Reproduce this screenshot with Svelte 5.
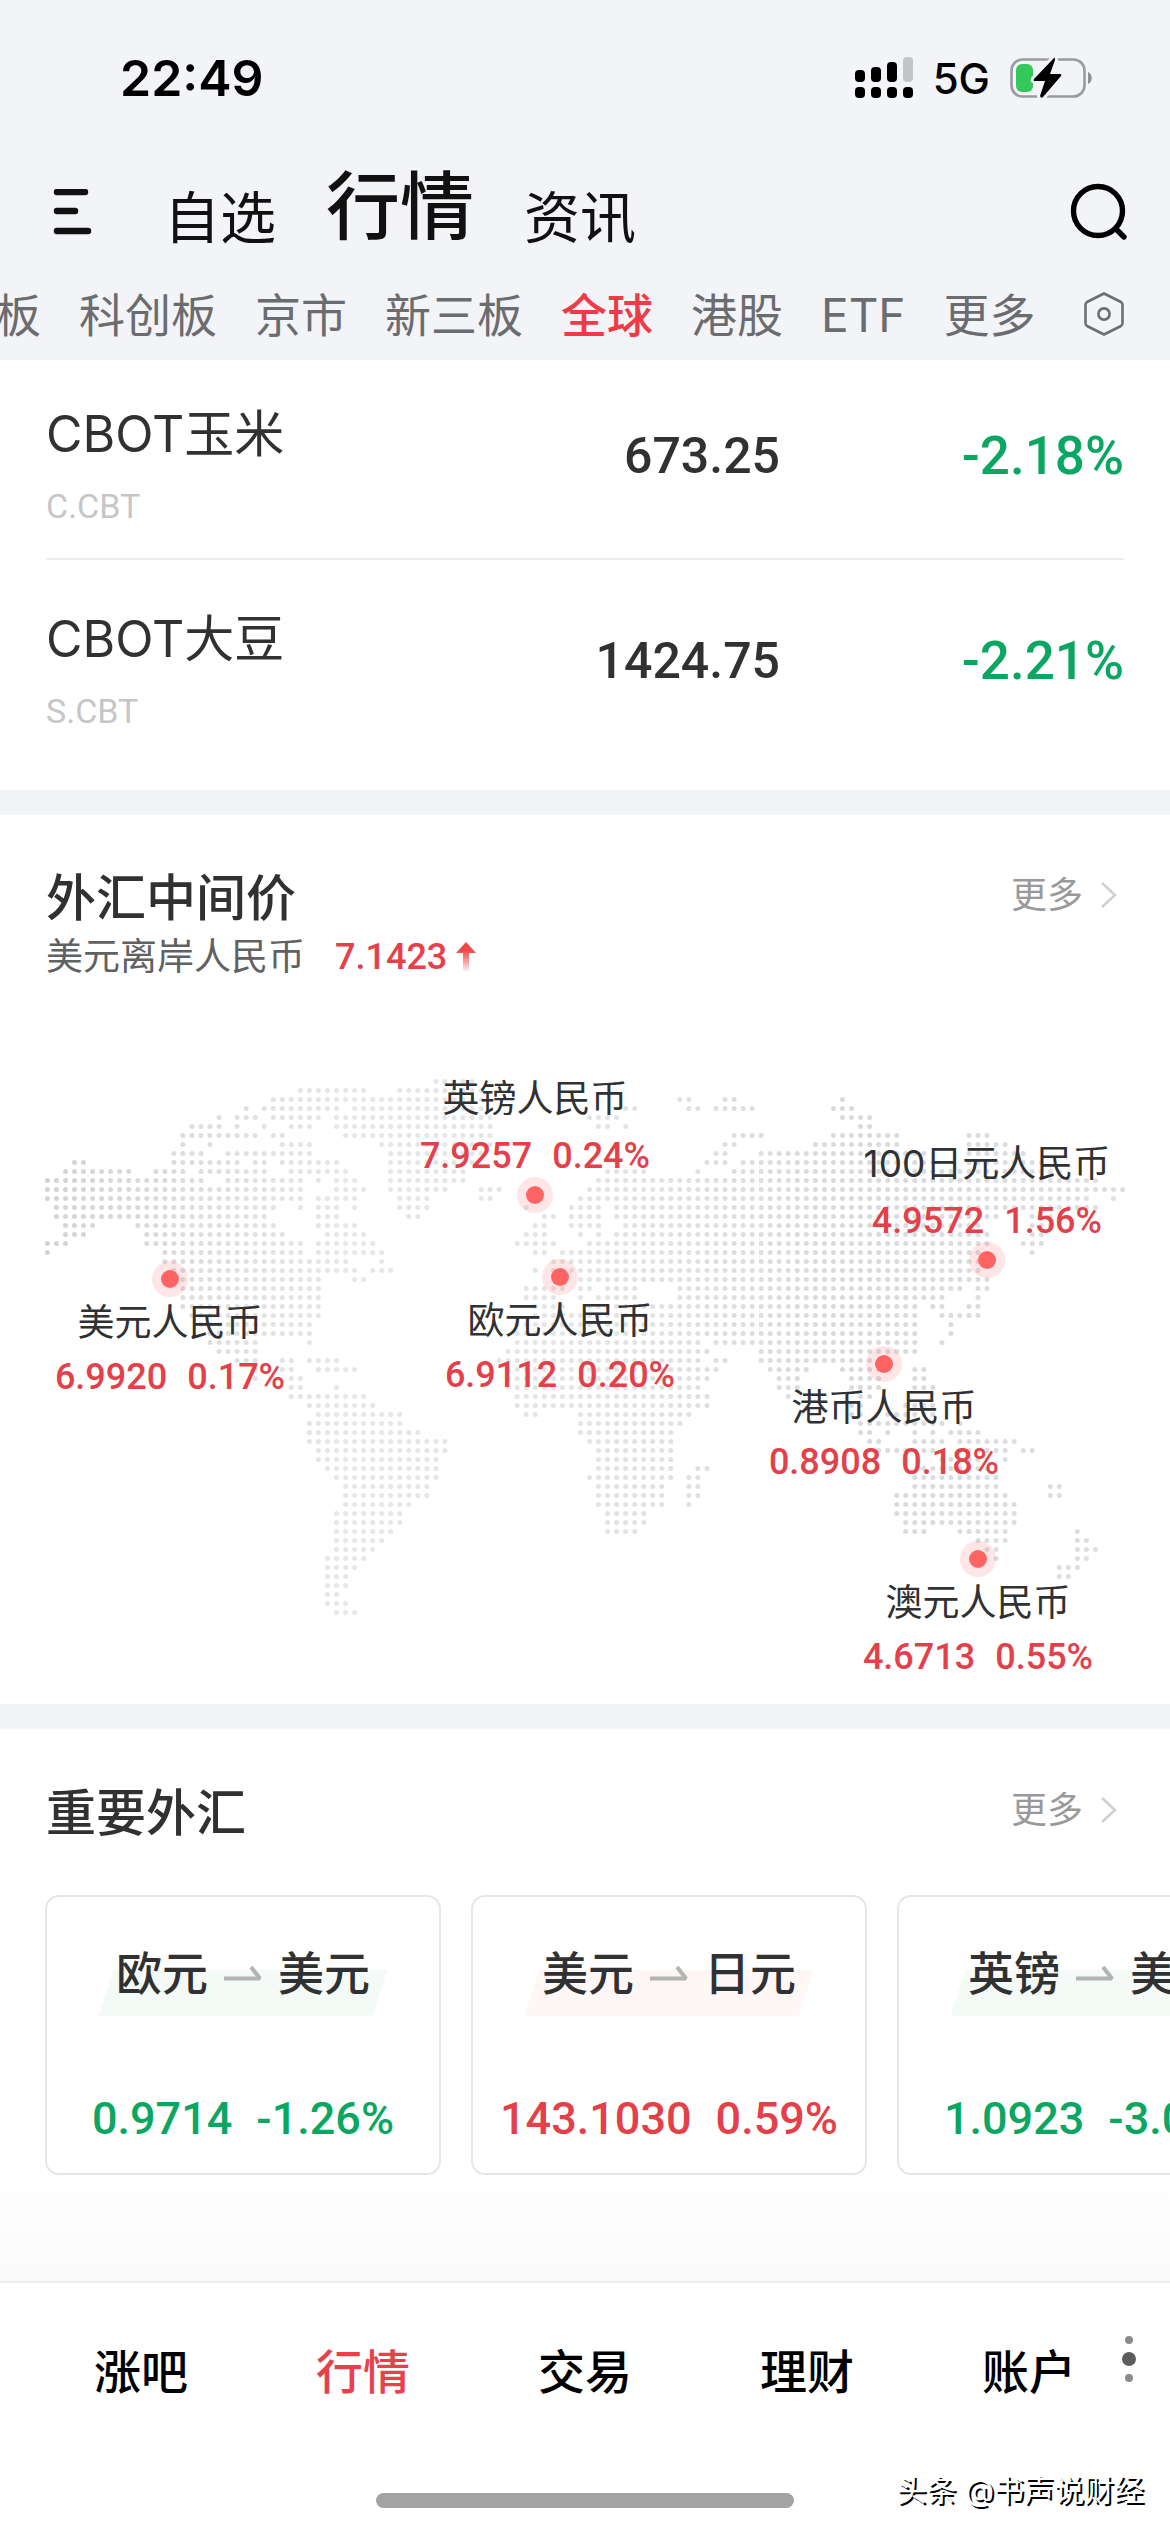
<script>
  const sections = ['自选', '行情', '资讯'];
  const markets = ['板', '科创板', '京市', '新三板', '全球', '港股', 'ETF', '更多'];
  const futures = [
    { name: 'CBOT玉米', code: 'C.CBT', price: '673.25', change: '-2.18%' },
    { name: 'CBOT大豆', code: 'S.CBT', price: '1424.75', change: '-2.21%' }
  ];
  const pairs = [
    { from: '欧元', to: '美元', rate: '0.9714', change: '-1.26%', dir: 'down' },
    { from: '美元', to: '日元', rate: '143.1030', change: '0.59%', dir: 'up' },
    { from: '英镑', to: '美元', rate: '1.0923', change: '-3.02%', dir: 'down' }
  ];
  const tabs = ['涨吧', '行情', '交易', '理财', '账户'];

  const mapWidth = 1170;
  const mapHeight = 640;
  const pins = [
    { name: '美元人民币', rate: '6.9920', change: '0.17%', x: 170, y: 221 },
    { name: '英镑人民币', rate: '7.9257', change: '0.24%', x: 535, y: 137, above: true },
    { name: '欧元人民币', rate: '6.9112', change: '0.20%', x: 560, y: 219 },
    { name: '100日元人民币', rate: '4.9572', change: '1.56%', x: 987, y: 202, above: true },
    { name: '港币人民币', rate: '0.8908', change: '0.18%', x: 884, y: 306 },
    { name: '澳元人民币', rate: '4.6713', change: '0.55%', x: 978, y: 501 }
  ];

  // Land columns of the dotted world map, one line per row of dots.
  const land = `43-47
28-35 39-48
25-48 70-71 75-76 88
22 24-32 34-48 64-65 71-72 74-78 87-89
19 21-23 25-30 32-49 60-63 88-91
16-19 21 24 27-29 32-49 61-62 64 90-91
15-23 25-26 33-49 76-79 87-94 102-104
15 18 26-29 37-49 75-76 85-94 102-106
14-17 20-29 38-48 74-75 79-97 102-108
3-4 14-21 23-24 26-32 38-47 73-75 77-98 102-110
2-9 12-15 17-24 27-33 38-46 62-66 72 76-112
0-17 20-28 30 32-34 38-46 61-116
0-28 32-35 38-44 48-50 60-119
0-28 30-34 39-42 48-49 59-115 118
1-25 28 30-32 34 39-42 53 58-61 63-116
1-24 30-32 40-41 55-56 58-61 63-105 109-111
2-5 10-25 30-34 54-55 58-61 64-103 109-111
2-4 11-26 31-35 53-55 59 61 63-104 109-110
0-2 11-28 30-36 52-56 60-104 108-110
0 13-28 30-37 54-55 57-103 109
13-33 37 56-103
14-34 36-38 54 56-103
15-30 34-35 59-104
15-30 53-57 59-60 62-65 70-101 103-104
15-30 53-56 59 61-65 70-99 103
15-30 54-57 60-96 98-99 102-103
16-30 54-96 99-103
17-29 52-96 100
18-29 52-96 100
18-23 29 52-72 74-96 99
19-23 51-73 79-96
21-23 26-27 29-32 50-72 74-75 79-91
23 26-27 30-34 51-74 80-84 88-92 96-97
23 27-28 51-73 81-83 89-92 96-97
27-28 32 51-72 81-83 89-92 96-98
27-35 52-73 82 90-91
29-36 52-73 89-90 95-98
30-39 53-54 59-71 89-90 93-98
29-39 59-70 90-99 101
29-41 59-69 90-91 93 96 98 100-103
29-44 60-69 91-92 96-99 101-107
30-44 61-69 92-98 101-106 108-109
30-43 61-69 99-103 106
31-43 61-69 72-73 97-104
32-43 60-69 71-72 96-105
33-42 61-68 71-72 96-105 111-112
33-42 61-68 71-72 94-106 111-112
33-40 61-68 71 94-107
32-39 62-66 94-107
32-39 62-66 95-107
32-38 62-65 95-97 101-106 114
32-37 103-106 114-115
32-36 104-105 114-116
31-35 105 114-115
31-34 112-114
31-33 112-113
31-33
31-32
31-33
32-34`;

  const dotPath = land
    .split('\n')
    .flatMap((line, row) =>
      line.split(' ').flatMap((run) => {
        const [start, end = start] = run.split('-').map(Number);
        return Array.from(
          { length: end - start + 1 },
          (_, k) => `M${(47.4 + 9.035 * (start + k)).toFixed(1)} ${(23.4 + 9 * row).toFixed(1)}h0`
        );
      })
    )
    .join('');
</script>

{#snippet more()}
  <a class="more" href="#more">
    更多
    <svg width="18" height="28" viewBox="0 0 18 28" aria-hidden="true">
      <path d="M2 2 15 14 2 26" fill="none" stroke="#cfcfcf" stroke-width="2.5" />
    </svg>
  </a>
{/snippet}

<div class="page">
  <header class="top">
    <div class="status">
      <span class="time">22:49</span>
      <div class="indicators">
        <svg width="58" height="42" viewBox="0 0 58 42" aria-hidden="true">
          <rect x="0" y="13" width="10" height="12" rx="4" />
          <rect x="16" y="10" width="10" height="15" rx="4" />
          <rect x="32" y="5" width="10" height="20" rx="4" />
          <rect x="48" y="0" width="10" height="25" rx="4" fill="#c4c5c8" />
          <rect x="0" y="30" width="10" height="11" rx="4" />
          <rect x="16" y="30" width="10" height="11" rx="4" />
          <rect x="32" y="30" width="10" height="11" rx="4" />
          <rect x="48" y="30" width="10" height="11" rx="4" />
        </svg>
        <span class="network">5G</span>
        <svg width="83" height="42" viewBox="0 0 83 42" aria-hidden="true">
          <rect x="1.5" y="2.5" width="73" height="37" rx="11" fill="none" stroke="#9a9b9f" stroke-width="2.6" />
          <path d="M78 15c5 2 5 10 0 12z" fill="#8d8e92" />
          <rect x="6" y="7" width="17" height="28" rx="6" fill="#34c759" />
          <path d="M44 1 24 22q-1 2 1 2h10L30 39q1 3 3 1L51 19q1-2-1-2H40L45 3q0-3-1-2z" fill="#000" stroke="#f3f4f8" stroke-width="6" paint-order="stroke" />
        </svg>
      </div>
    </div>

    <div class="nav">
      <button class="icon" aria-label="菜单">
        <svg width="40" height="46" viewBox="0 0 40 46" aria-hidden="true">
          <path d="M5 3h28M5 22h18M5 42h31" stroke="#111" stroke-width="6.500" stroke-linecap="round" />
        </svg>
      </button>
      <nav class="sections">
        {#each sections as item}
          <a href="#section" class:active={item === '行情'}>{item}</a>
        {/each}
      </nav>
      <button class="icon" aria-label="搜索">
        <svg width="58" height="58" viewBox="0 0 58 58" aria-hidden="true">
          <circle cx="28" cy="28" r="24.5" fill="none" stroke="#000" stroke-width="5.4" />
          <path d="m46 46 8 8" stroke="#000" stroke-width="5.4" stroke-linecap="round" />
        </svg>
      </button>
    </div>

    <div class="markets">
      <nav class="market-list">
        {#each markets as item}
          <a href="#market" class:active={item === '全球'}>{item}</a>
        {/each}
      </nav>
      <button class="icon" aria-label="设置">
        <svg width="40" height="44" viewBox="0 0 40 44" aria-hidden="true">
          <g fill="none" stroke="#6d6e71" stroke-width="2.6" stroke-linejoin="round">
            <path d="M20 1.500 37 10q1.500 1 1.500 3v18q0 2-1.500 3L20 42.500 3 34q-1.500-1-1.500-3V13q0-2 1.500-3z" />
            <circle cx="20" cy="22" r="5.600" />
          </g>
        </svg>
      </button>
    </div>
  </header>

  <main>
    <section class="quotes">
      {#each futures as q}
        <div class="quote">
          <div class="names">
            <span class="name">{q.name}</span>
            <span class="code">{q.code}</span>
          </div>
          <span class="price">{q.price}</span>
          <span class="change down">{q.change}</span>
        </div>
      {/each}
    </section>

    <section class="parity">
      <div class="head">
        <h2>外汇中间价</h2>
        {@render more()}
      </div>
      <div class="offshore">
        <span>美元离岸人民币</span>
        <strong>7.1423</strong>
        <svg width="20" height="30" viewBox="0 0 20 30" aria-hidden="true">
          <defs>
            <linearGradient id="rise" x1="0" y1="0" x2="0" y2="1">
              <stop offset="0.3" stop-color="#f04848" />
              <stop offset="1" stop-color="#f04848" stop-opacity="0.1" />
            </linearGradient>
          </defs>
          <path d="M10 0 20 11H13V29H7V11H0z" fill="url(#rise)" />
        </svg>
      </div>
      <div class="map">
        <svg class="world" viewBox="0 0 {mapWidth} {mapHeight}" aria-hidden="true">
          <defs>
            <linearGradient id="land" gradientUnits="userSpaceOnUse" x1="47" y1="0" x2="1123" y2="0">
              <stop offset="0" stop-color="#d3d4d6" />
              <stop offset="0.28" stop-color="#e7e7e9" />
              <stop offset="0.5" stop-color="#e3e4e6" />
              <stop offset="0.75" stop-color="#d9dadd" />
              <stop offset="1" stop-color="#dedfe2" />
            </linearGradient>
          </defs>
          <path d={dotPath} stroke="url(#land)" stroke-width="5" stroke-linecap="round" fill="none" />
        </svg>
        {#each pins as pin}
          <a
            href="#rate"
            class="pin"
            class:above={pin.above}
            style="left: {(pin.x / mapWidth) * 100}%; top: {(pin.y / mapHeight) * 100}%"
          >
            <i class="spot"></i>
            <span class="label">
              <span class="pin-name">{pin.name}</span>
              <span class="pin-rate"><span>{pin.rate}</span><span>{pin.change}</span></span>
            </span>
          </a>
        {/each}
      </div>
    </section>

    <section class="forex">
      <div class="head">
        <h2>重要外汇</h2>
        {@render more()}
      </div>
      <div class="cards">
        {#each pairs as p}
          <a class="card {p.dir}" href="#pair">
            <span class="pair">
              <span>{p.from}</span>
              <svg width="38" height="16" viewBox="0 0 38 16" aria-hidden="true">
                <path d="M0 13.500H36L27 2" fill="none" stroke="#b3b4b3" stroke-width="4" stroke-linejoin="bevel" />
              </svg>
              <span>{p.to}</span>
            </span>
            <span class="values"><span>{p.rate}</span><span>{p.change}</span></span>
          </a>
        {/each}
      </div>
    </section>
  </main>

  <footer>
    <nav class="tabs">
      {#each tabs as tab}
        <a href="#tab" class:active={tab === '行情'}>{tab}</a>
      {/each}
    </nav>
    <svg class="grip" width="14" height="48" viewBox="0 0 14 48" aria-hidden="true">
      <circle cx="7" cy="5" r="4" fill="#8b8b8b" />
      <circle cx="7" cy="24" r="7" fill="#5d5d5d" />
      <circle cx="7" cy="43" r="4" fill="#8b8b8b" />
    </svg>
    <div class="home"></div>
    <span class="credit">头条 @书声说财经</span>
  </footer>
</div>

<style>
  :global(body) {
    margin: 0;
    background: #fff;
  }
  .page {
    display: flex;
    flex-direction: column;
    min-height: 100vh;
    overflow: hidden;
    color: #303133;
    font-family: Inter, 'Noto Sans CJK SC', sans-serif;
  }
  .page * {
    box-sizing: border-box;
  }
  a {
    color: inherit;
    text-decoration: none;
  }
  button {
    padding: 0;
    border: 0;
    background: none;
  }
  svg {
    display: block;
    flex: none;
  }
  h2 {
    margin: 0;
    font-size: 50px;
    line-height: 64px;
    font-weight: 500;
  }

  .top {
    position: relative;
    z-index: 1;
    background: #f3f4f8;
  }
  .status {
    display: flex;
    align-items: center;
    justify-content: space-between;
    height: 156px;
    padding: 0 77px 0 120px;
    color: #000;
  }
  .time {
    font-size: 50px;
    font-weight: 600;
  }
  .indicators {
    display: flex;
    align-items: center;
    gap: 20px;
  }
  .network {
    font-size: 42px;
    font-weight: 500;
  }
  .nav {
    display: flex;
    align-items: center;
    height: 112px;
    padding: 0 42px 0 52px;
  }
  .sections {
    display: flex;
    flex: 1;
    align-items: flex-end;
    gap: 50px;
    padding: 0 0 12px 72px;
    color: #111;
    font-size: 56px;
    line-height: 76px;
  }
  .sections .active {
    font-size: 74px;
    font-weight: 500;
    line-height: 100px;
  }
  .markets {
    display: flex;
    align-items: center;
    height: 92px;
    padding-right: 46px;
  }
  .market-list {
    display: flex;
    flex: 1;
    gap: 38px;
    margin-left: -5px;
    padding-top: 2px;
    color: #6b6c6f;
    font-size: 46px;
    line-height: 60px;
    white-space: nowrap;
  }
  .market-list .active {
    color: #ef3b48;
    font-weight: 500;
  }

  main {
    display: flex;
    flex: 1;
    flex-direction: column;
    gap: 25px;
    background: #f2f3f7;
  }
  section {
    background: #fff;
  }
  .quotes {
    margin-top: -6px;
    padding: 0 46px 28px;
  }
  .quote {
    display: grid;
    grid-template-columns: 380px 1fr 344px;
    align-items: center;
    height: 204px;
  }
  .quote + .quote {
    border-top: 2px solid #ededed;
  }
  .names {
    display: flex;
    flex-direction: column;
    gap: 18px;
    padding-top: 22px;
  }
  .name {
    font-size: 50px;
    line-height: 60px;
  }
  .code {
    color: #c6c6c8;
    font: 34px/48px Roboto, sans-serif;
  }
  .price,
  .change {
    font: 500 50px/60px Roboto, sans-serif;
    text-align: right;
  }
  .change {
    font-size: 53px;
  }
  .down {
    color: #0ba662;
  }
  .up {
    color: #e34049;
  }

  .head {
    display: flex;
    align-items: flex-start;
    justify-content: space-between;
    padding: 0 52px 0 46px;
  }
  .more {
    display: flex;
    align-items: center;
    gap: 17px;
    color: #999;
    font-size: 36px;
    line-height: 58px;
  }
  .parity {
    padding: 51px 0 6px;
  }
  .offshore {
    display: flex;
    align-items: center;
    padding: 0 46px;
    color: #606163;
    font-size: 37px;
    line-height: 54px;
  }
  .offshore strong {
    margin: 0 9px 0 30px;
    color: #e8404a;
    font: 500 36px/54px Roboto, sans-serif;
  }
  .map {
    position: relative;
    margin-top: 74px;
  }
  .world {
    width: 100%;
  }
  .pin {
    position: absolute;
    width: 0;
    height: 0;
    white-space: nowrap;
  }
  .spot {
    position: absolute;
    top: -18px;
    left: -18px;
    width: 36px;
    height: 36px;
    border: 9px solid rgba(255, 100, 100, 0.16);
    border-radius: 50%;
    background: #ff6465;
    background-clip: padding-box;
  }
  .label {
    position: absolute;
    top: 17px;
    left: 0;
    display: flex;
    flex-direction: column;
    align-items: center;
    transform: translateX(-50%);
  }
  .above .label {
    top: auto;
    bottom: 12px;
    gap: 3px;
  }
  .pin-name {
    font-size: 37px;
    line-height: 54px;
  }
  .pin-rate {
    display: flex;
    gap: 20px;
    color: #e34049;
    font: 500 36px/54px Roboto, sans-serif;
  }

  .forex {
    flex: 1;
    padding-top: 52px;
    background: linear-gradient(#fff 80%, #fafafa);
  }
  .cards {
    display: flex;
    gap: 30px;
    margin-top: 50px;
    padding-left: 45px;
    overflow: hidden;
  }
  .card {
    display: flex;
    flex: none;
    flex-direction: column;
    align-items: center;
    gap: 86px;
    width: 396px;
    height: 280px;
    padding-top: 46px;
    border: 2px solid #e6e6e6;
    border-radius: 14px;
    background: #fff;
  }
  .pair {
    position: relative;
    z-index: 0;
    display: flex;
    align-items: center;
    gap: 16px;
    color: #303133;
    font-size: 46px;
    font-weight: 500;
    line-height: 60px;
  }
  .pair::before {
    position: absolute;
    z-index: -1;
    right: -10px;
    bottom: -13px;
    left: -10px;
    height: 46px;
    background: #f4faf6;
    transform: skewX(-18deg);
    content: '';
  }
  .up .pair::before {
    background: #fff6f6;
  }
  .values {
    display: flex;
    gap: 24px;
    font: 500 45px/60px Roboto, sans-serif;
  }

  footer {
    position: relative;
    height: 251px;
    border-top: 2px solid #ededed;
    background: #fff;
  }
  .tabs {
    display: grid;
    grid-template-columns: repeat(5, 1fr);
    padding: 59px 30px 0;
    color: #000;
    font-size: 47px;
    font-weight: 500;
    line-height: 60px;
    text-align: center;
  }
  .tabs .active {
    color: #e8414b;
  }
  .grip {
    position: absolute;
    top: 52px;
    right: 34px;
  }
  .home {
    width: 418px;
    height: 15px;
    margin: 91px auto 0;
    border-radius: 8px;
    background: #a4a4a4;
  }
  .credit {
    position: absolute;
    right: 26px;
    bottom: 22px;
    color: #fff;
    font-size: 30px;
    line-height: 40px;
    text-shadow: 2px 2px 0 #000;
  }
</style>
